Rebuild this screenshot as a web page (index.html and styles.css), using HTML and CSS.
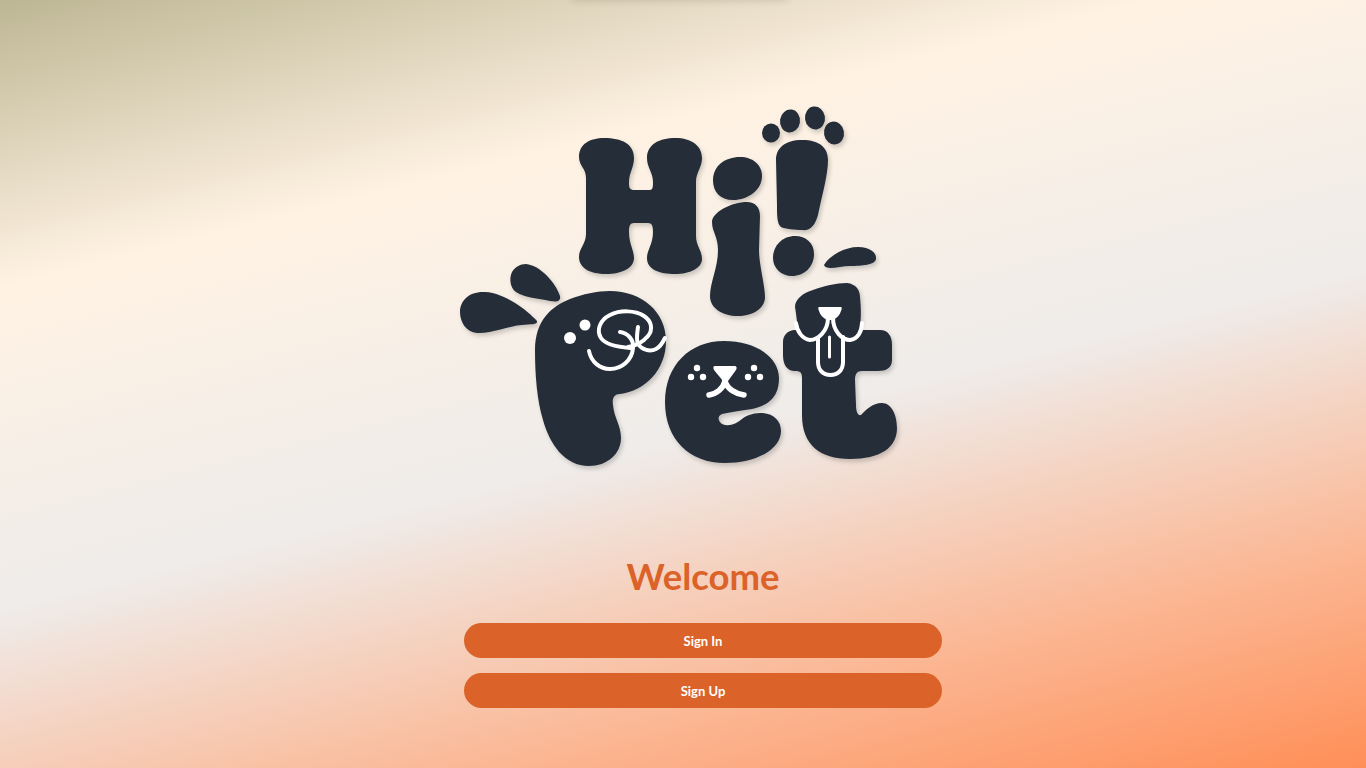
FILE: index.html
```html
<!DOCTYPE html>
<html lang="en">
<head>
    <meta charset="UTF-8">
    <meta name="viewport" content="width=device-width, initial-scale=1.0">
    <title>Hi! Pet</title>
    <link rel="stylesheet" href="styles.css">
</head>
<body>

<div class="top-shadow"></div>

<main class="welcome-page">
    <svg class="logo" viewBox="453 95 500 380" role="img" aria-label="Hi! Pet">
        <g class="logo-shapes">
            <ellipse cx="771" cy="133" rx="9" ry="9.5"/>
            <ellipse cx="790" cy="121" rx="10" ry="11.5" transform="rotate(8 790 121)"/>
            <ellipse cx="815" cy="118" rx="10" ry="11.5" transform="rotate(-8 815 118)"/>
            <ellipse cx="834" cy="133" rx="10" ry="11.5" transform="rotate(-10 834 133)"/>
            <path d="M604 138C622 138 634 144 634 158C634 168 629 172 629 183C629 188 630 190 634 190L650 190C653 190 653 186 653 182C653 172 647 168 647 158C647 144 660 138 675 138C692 138 702 146 702 158C702 168 696 172 696 182L696 236C696 246 702 250 702 259C702 268 690 274 675 274C660 274 647 270 647 258C647 250 653 244 653 232C653 226 652 223 648 223L634 223C630 223 629 226 629 232C629 244 634 250 634 258C634 268 622 274 606 274C590 274 579 268 579 257C579 248 586 244 586 234L586 178C586 168 579 166 579 157C579 144 590 138 604 138Z"/>
            <path d="M740 157C753 157 762 165 762 176C762 190 748 200 733 200C720 200 713 192 713 180C713 166 725 157 740 157Z"/>
            <path d="M747 202C755 202 760 207 760 216L759 250C759 265 765 285 765 297C765 309 752 316 738 316C722 316 710 308 710 296C710 282 718 268 718 250C718 236 712 232 712 222C712 212 732 202 747 202Z"/>
            <path d="M802 140C820 140 828 148 828 160C828 175 822 195 818 215C815 226 810 231 802 230C795 230 785 229 781 227C777 224 777 215 777 205L776 160C776 148 785 140 802 140Z"/>
            <path d="M795 236C806 236 814 243 814 254C814 267 804 276 792 276C781 276 773 268 773 258C773 245 783 236 795 236Z"/>
            <path d="M824 265C830 255 845 247 858 247C870 247 877 253 876 259C875 265 862 266 850 266C840 266 826 271 824 265Z"/>
            <path d="M526 264C540 265 556 283 560 296C561 302 556 302 550 301C538 298 525 298 516 292C510 288 509 278 512 272C515 267 520 264 526 264Z"/>
            <path d="M485 292C505 293 527 310 537 321C538 325 530 324 522 325C508 326 490 334 477 333C466 332 460 322 460 312C460 300 470 291 485 292Z"/>
            <path d="M610 291C642 291 666 312 666 341C666 370 645 391 620 394C614 394 612 398 613 405C614 418 621 425 621 438C621 454 607 466 589 466C565 466 550 445 543 420C537 400 535 375 535 350C535 320 552 306 570 299C583 294 597 291 610 291Z"/>
            <path d="M724 341C757 341 779 358 779 378C779 396 770 405 752 409C740 411 730 412 722 414C717 416 718 421 722 424C729 427 736 424 742 419C748 414 755 413 763 413C774 414 781 421 781 431C781 450 755 463 725 463C690 463 665 440 665 402C665 365 690 341 724 341Z"/>
            <path d="M795 330L880 330C888 330 892 336 892 345L892 360C892 368 886 371 878 371L862 371C857 371 855 374 855 380L856 405C856 412 858 416 861 415C866 410 872 403 882 403C891 403 897 414 897 428C897 448 880 459 850 459C820 459 802 445 802 415L802 378C802 372 800 371 795 371C787 371 783 365 783 355L783 342C783 335 788 330 795 330Z"/>
            <path d="M847 283C856 284 860 290 860 297C861 308 862 322 858 335L800 335C797 328 797 318 795 307C795 299 803 293 813 290C824 286 836 283 847 283Z"/>
        </g>
        <g class="logo-dots">
            <circle cx="570" cy="338" r="6"/>
            <circle cx="585" cy="325" r="5.5"/>
            <circle cx="697" cy="368" r="3.2"/>
            <circle cx="691" cy="377" r="3.2"/>
            <circle cx="703" cy="377" r="3.2"/>
            <circle cx="754" cy="368" r="3.2"/>
            <circle cx="748" cy="377" r="3.2"/>
            <circle cx="760" cy="377" r="3.2"/>
            <path d="M715 366L734 366C737 366 737 368 736 370L728 381L723 381L714 370C713 368 713 366 715 366Z"/>
            <path d="M819 307L841 307C842 307 842 309 841 311C840 315 837 318 833 320L827 320C823 318 820 315 819 311C818 309 818 307 819 307Z"/>
        </g>
        <g class="logo-lines">
            <path d="M589 351C591 362 600 369 610 369C622 369 632 360 633 348C634 340 628 333 620 332"/>
            <path d="M630 348C618 347 605 344 601 338C596 330 600 320 610 315C620 310 635 310 644 316C652 321 653 330 648 336C642 343 635 346 628 347"/>
            <path d="M638 327C637 334 636 340 638 344C642 350 650 352 656 349C660 347 663 342 665 338"/>
            <path d="M796 323C797 331 802 339 810 340C818 340 828 331 828 318"/>
            <path d="M833 318C833 331 842 340 850 340C858 339 862 331 862 323"/>
            <path d="M818 339L818 362C818 370 823 375 830.5 375C838 375 843 370 843 362L843 337"/>
            <path class="line-centre" d="M829.5 337L829.5 357"/>
            <path class="line-mouth" d="M725 381C723 389 716 394 709 395"/>
            <path class="line-mouth" d="M725 381C727 389 736 394 744 395"/>
        </g>
    </svg>

    <h1 class="welcome-title">Welcome</h1>
    <button class="auth-button">Sign In</button>
    <button class="auth-button">Sign Up</button>
</main>

</body>
</html>
```

FILE: styles.css
```css
html, body {
    margin: 0;
    padding: 0;
    height: 100%;
    overflow: hidden;
    font-family: Lato, "Liberation Sans", sans-serif;
}

body {
    background: linear-gradient(166deg, #bdb693 0%, #fff2e3 26%, #efecea 55%, #fbb794 80%, #ff8f58 100%);
}

.top-shadow {
    position: absolute;
    top: -40px;
    left: 572px;
    width: 216px;
    height: 40px;
    box-shadow: 0 0 8px rgba(0, 0, 0, 0.14);
}

.welcome-page {
    display: flex;
    flex-direction: column;
    align-items: center;
    padding-top: 95px;
    padding-left: 40px;
}

.logo {
    display: block;
    width: 500px;
    height: 380px;
}

.logo-shapes {
    fill: #252d39;
    filter: drop-shadow(2px 3px 2px rgba(0, 0, 0, 0.18));
}

.logo-dots {
    fill: #ffffff;
}

.logo-lines {
    fill: none;
    stroke: #ffffff;
    stroke-width: 4;
    stroke-linecap: round;
}

.line-centre {
    stroke-width: 3;
}

.line-mouth {
    stroke-width: 5.5;
}

.welcome-title {
    margin: 78px 0 24px;
    font-size: 36.5px;
    line-height: 46px;
    font-weight: 700;
    color: #db6329;
}

.auth-button {
    display: block;
    width: 478px;
    height: 35px;
    margin-bottom: 15px;
    padding: 0;
    border: none;
    border-radius: 18px;
    background-color: #db6329;
    color: #ffffff;
    font-family: inherit;
    font-size: 13px;
    font-weight: 700;
    cursor: pointer;
}
```
